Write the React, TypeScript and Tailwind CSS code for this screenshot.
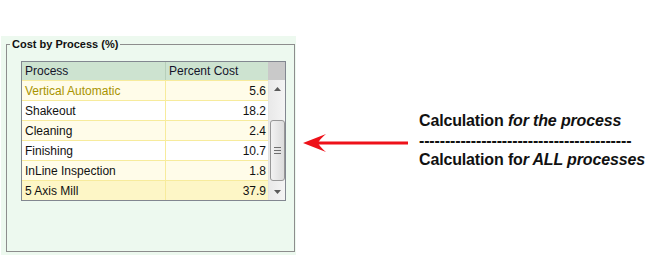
import React from 'react';

const rows = [
  { name: 'Vertical Automatic', pct: '5.6' },
  { name: 'Shakeout', pct: '18.2' },
  { name: 'Cleaning', pct: '2.4' },
  { name: 'Finishing', pct: '10.7' },
  { name: 'InLine Inspection', pct: '1.8' },
  { name: '5 Axis Mill', pct: '37.9' },
];

function rowBg(i: number) {
  if (i === rows.length - 1) return 'bg-[#fdf6c6]';
  return i % 2 === 0 ? 'bg-[#fffce9]' : 'bg-white';
}

function ScrollBar() {
  return (
    <div className="w-[17px] flex flex-col items-center bg-gradient-to-r from-[#e9e9e9] to-[#f4f4f4] border-l border-[#e3e3e3]">
      <div className="h-[17px] flex items-center justify-center">
        <svg width="7" height="4" viewBox="0 0 7 4">
          <path d="M0 4 L3.5 0 L7 4 Z" fill="#5a5a5a" />
        </svg>
      </div>
      <div className="h-[23px]" />
      <div className="w-[15px] h-[61px] rounded-[3px] border border-[#979797] bg-gradient-to-r from-[#f2f2f2] to-[#dcdcdc] flex flex-col items-center justify-center gap-[2px]">
        <div className="w-[7px] h-px bg-[#6f6f6f]" />
        <div className="w-[7px] h-px bg-[#6f6f6f]" />
        <div className="w-[7px] h-px bg-[#6f6f6f]" />
      </div>
      <div className="flex-1 flex items-end justify-center pb-[6px]">
        <svg width="7" height="4" viewBox="0 0 7 4">
          <path d="M0 0 L3.5 4 L7 0 Z" fill="#5a5a5a" />
        </svg>
      </div>
    </div>
  );
}

function CostGrid() {
  return (
    <div className="w-[265px] border border-[#828790] flex flex-col text-[12px] font-['Liberation_Sans',Arial,sans-serif]">
      <div className="flex h-[18px] text-[#14142a]">
        <div className="w-[144px] bg-[#cde3d0] border-r border-[#b7cfba] pl-[3px] flex items-center">Process</div>
        <div className="w-[102px] bg-[#cde3d0] pl-[3px] flex items-center">Percent Cost</div>
        <div className="w-[17px] bg-[#c9c9c9]" />
      </div>
      <div className="flex">
        <div className="w-[246px] flex flex-col">
          {rows.map((r, i) => (
            <div key={r.name} className={`flex h-[20px] border-t border-[#f7eb9c] ${rowBg(i)}`}>
              <div
                className={`w-[144px] border-r border-[#f7eb9c] pl-[3px] flex items-center ${
                  i === 0 ? 'text-[#a89300]' : 'text-[#111]'
                }`}
              >
                {r.name}
              </div>
              <div className="w-[102px] pr-[2px] flex items-center justify-end text-[#111]">{r.pct}</div>
            </div>
          ))}
        </div>
        <ScrollBar />
      </div>
    </div>
  );
}

function Arrow() {
  return (
    <svg width="106" height="20" viewBox="0 0 106 20">
      <line x1="14" y1="10" x2="105" y2="10" stroke="#ee1119" strokeWidth="3" />
      <path d="M0 10 L23 1 Q17 6 15 10 Q17 14 23 19 Z" fill="#ee1119" />
    </svg>
  );
}

export default function App() {
  return (
    <div className="w-[669px] h-[265px] bg-white flex overflow-hidden">
      <div className="ml-[1px] mt-[36px] w-[295px] h-[219px] bg-[#edf9ef] pl-[5px] pt-[8px] pr-[1px] pb-[3px]">
        <div className="relative h-full border border-[#8d8d8d] pl-[14px] pt-[16px]">
          <div className="absolute -top-[8px] left-[3px] px-[2px] bg-[#edf9ef] text-[11px] leading-[14px] font-bold text-[#111] font-['Liberation_Sans',Arial,sans-serif]">
            Cost by Process (%)
          </div>
          <CostGrid />
        </div>
      </div>
      <div className="ml-[7px] mt-[111px] self-start flex items-center gap-[10px]">
        <div className="pt-[6px]">
          <Arrow />
        </div>
        <div className="flex flex-col text-[16px] leading-[19.5px] font-bold text-[#111] font-['Liberation_Sans',Arial,sans-serif] tracking-[-0.15px]">
          <div>
            Calculation <i>for the process</i>
          </div>
          <div>-----------------------------------------</div>
          <div>
            Calculation fo<i>r ALL processes</i>
          </div>
        </div>
      </div>
    </div>
  );
}
